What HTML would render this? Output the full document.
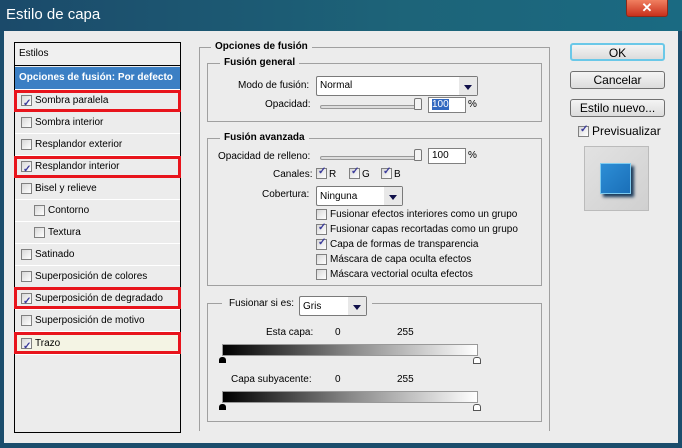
<!DOCTYPE html>
<html><head><meta charset="utf-8"><style>
*{box-sizing:border-box;margin:0;padding:0}
body{width:682px;height:448px;overflow:hidden;background:#1b4d6c;font-family:"Liberation Sans",sans-serif;font-size:10px;color:#000;position:relative}
.a{position:absolute}
#title{left:0;top:0;width:682px;height:31px;background:linear-gradient(90deg,#1b4a6a,#1d6479 60%,#1a6a82);}
#title span{position:absolute;left:6px;top:6px;color:#fff;font-size:15px}
#close{left:626px;top:0;width:42px;height:17px;background:linear-gradient(#f08060,#c8301c);border:1px solid #8a2a1a;border-top:none;border-radius:0 0 3px 3px;color:#fff;font-size:13px;font-weight:bold;text-align:center;line-height:15px}
#body{left:4px;top:31px;width:674px;height:412px;background:#ececec}
#list{left:14px;top:42px;width:167px;height:391px;border:1px solid #000;background:#ececec}
.row{position:absolute;left:0;width:165px;height:22px;border-bottom:1px solid #fff;line-height:21px;font-size:10px}
.cb{position:absolute;width:11px;height:11px;border:1px solid #808080;background:linear-gradient(135deg,#d8d8d8,#fff)}
.ck::after{content:"✓";position:absolute;left:1px;top:-3px;font-size:10px;color:#3a3a9a;font-weight:bold}
.red{position:absolute;left:14px;width:167px;height:22px;border:3px solid #e8141c}
fieldset{position:absolute;border:1px solid #a0a0a0;border-color:#a0a0a0 #a0a0a0 #a0a0a0 #a0a0a0}
.lg{position:absolute;background:#ececec;font-weight:bold;padding:0 4px;font-size:10px}
.sel{position:absolute;background:#fff;border:1px solid #7a7a7a;border-radius:2px;font-size:10px;padding-left:3px}
.sel i{position:absolute;right:0;top:0;bottom:0;width:18px;background:#e8e8e8;}
.sel i::after{content:"";position:absolute;left:5px;top:45%;border:4px solid transparent;border-top:5px solid #10104a;border-bottom:none}
.inp{position:absolute;background:#fff;border:1px solid #808080;height:16px;font-size:10px;padding-left:3px;line-height:14px;width:38px}
.sl{position:absolute;height:4px;border:1px solid #999;border-radius:2px;background:#ddd}
.th{position:absolute;width:8px;height:12px;background:#f4f4f4;border:1px solid #777;border-radius:2px 2px 1px 1px}
.btn{position:absolute;left:570px;width:95px;height:18px;border:1px solid #707070;border-radius:3px;background:linear-gradient(#f4f4f4,#dcdcdc);text-align:center;font-size:12px;line-height:16px}
.grad{position:absolute;left:222px;width:256px;height:12px;background:linear-gradient(90deg,#000,#888 50%,#fff);border:1px solid #999}
.tri{position:absolute;width:0;height:0}
</style></head><body>
<div id="title" class="a"><span>Estilo de capa</span></div>
<div id="close" class="a">✕</div>
<div id="body" class="a"></div>

<div id="list" class="a">
<div class="row" style="top:0;height:23px;border-bottom:1px solid #000;background:#f0f0f0;padding-left:4px">Estilos</div>
<div class="row" style="top:24px;height:23px;background:#3b7fc4;color:#fff;font-weight:bold;padding-left:4px;line-height:22px">Opciones de fusión: Por defecto</div>
<div class="row" style="top:47px"><span class="cb ck" style="left:6px;top:5px"></span><span style="position:absolute;left:20px">Sombra paralela</span></div>
<div class="row" style="top:69px"><span class="cb" style="left:6px;top:5px"></span><span style="position:absolute;left:20px">Sombra interior</span></div>
<div class="row" style="top:91px"><span class="cb" style="left:6px;top:5px"></span><span style="position:absolute;left:20px">Resplandor exterior</span></div>
<div class="row" style="top:113px"><span class="cb ck" style="left:6px;top:5px"></span><span style="position:absolute;left:20px">Resplandor interior</span></div>
<div class="row" style="top:135px"><span class="cb" style="left:6px;top:5px"></span><span style="position:absolute;left:20px">Bisel y relieve</span></div>
<div class="row" style="top:157px"><span class="cb" style="left:19px;top:5px"></span><span style="position:absolute;left:33px">Contorno</span></div>
<div class="row" style="top:179px"><span class="cb" style="left:19px;top:5px"></span><span style="position:absolute;left:33px">Textura</span></div>
<div class="row" style="top:201px"><span class="cb" style="left:6px;top:5px"></span><span style="position:absolute;left:20px">Satinado</span></div>
<div class="row" style="top:223px"><span class="cb" style="left:6px;top:5px"></span><span style="position:absolute;left:20px">Superposición de colores</span></div>
<div class="row" style="top:245px"><span class="cb ck" style="left:6px;top:5px"></span><span style="position:absolute;left:20px">Superposición de degradado</span></div>
<div class="row" style="top:267px"><span class="cb" style="left:6px;top:5px"></span><span style="position:absolute;left:20px">Superposición de motivo</span></div>
<div class="row" style="top:290px;background:#f4f4e4"><span class="cb ck" style="left:6px;top:5px"></span><span style="position:absolute;left:20px">Trazo</span></div>
</div>
<div class="red" style="top:90px"></div>
<div class="red" style="top:156px"></div>
<div class="red" style="top:287px"></div>
<div class="red" style="top:332px"></div>

<fieldset style="left:199px;top:47px;width:351px;height:384px;border-bottom:none"></fieldset>
<div class="lg" style="left:211px;top:41px">Opciones de fusión</div>
<fieldset style="left:207px;top:63px;width:335px;height:59px"></fieldset>
<div class="lg" style="left:220px;top:57px">Fusión general</div>
<div class="a" style="left:238px;top:80px">Modo de fusión:</div>
<div class="sel" style="left:316px;top:76px;width:162px;height:20px;line-height:18px">Normal<i></i></div>
<div class="a" style="left:265px;top:99px">Opacidad:</div>
<div class="sl" style="left:320px;top:105px;width:100px"></div>
<div class="th" style="left:414px;top:98px"></div>
<div class="inp" style="left:428px;top:97px"><span style="background:#3168c0;color:#fff">100</span></div>
<div class="a" style="left:468px;top:99px">%</div>

<fieldset style="left:207px;top:138px;width:335px;height:148px"></fieldset>
<div class="lg" style="left:220px;top:132px">Fusión avanzada</div>
<div class="a" style="left:218px;top:151px">Opacidad de relleno:</div>
<div class="sl" style="left:320px;top:156px;width:100px"></div>
<div class="th" style="left:414px;top:149px"></div>
<div class="inp" style="left:428px;top:148px">100</div>
<div class="a" style="left:468px;top:150px">%</div>
<div class="a" style="left:273px;top:169px">Canales:</div>
<span class="cb ck a" style="left:316px;top:168px"></span><div class="a" style="left:329px;top:169px">R</div>
<span class="cb ck a" style="left:349px;top:168px"></span><div class="a" style="left:362px;top:169px">G</div>
<span class="cb ck a" style="left:381px;top:168px"></span><div class="a" style="left:394px;top:169px">B</div>
<div class="a" style="left:262px;top:189px">Cobertura:</div>
<div class="sel" style="left:316px;top:186px;width:87px;height:20px;line-height:20px">Ninguna<i></i></div>
<span class="cb a" style="left:316px;top:209px"></span><div class="a" style="left:330px;top:209px">Fusionar efectos interiores como un grupo</div>
<span class="cb ck a" style="left:316px;top:224px"></span><div class="a" style="left:330px;top:224px">Fusionar capas recortadas como un grupo</div>
<span class="cb ck a" style="left:316px;top:239px"></span><div class="a" style="left:330px;top:239px">Capa de formas de transparencia</div>
<span class="cb a" style="left:316px;top:254px"></span><div class="a" style="left:330px;top:254px">Máscara de capa oculta efectos</div>
<span class="cb a" style="left:316px;top:269px"></span><div class="a" style="left:330px;top:269px">Máscara vectorial oculta efectos</div>

<fieldset style="left:207px;top:303px;width:335px;height:119px"></fieldset>
<div class="a" style="left:222px;top:296px;background:#ececec;padding:0 6px 0 8px;width:150px;height:12px"></div>
<div class="a" style="left:229px;top:298px">Fusionar si es:</div>
<div class="sel" style="left:299px;top:296px;width:68px;height:20px;line-height:20px">Gris<i></i></div>
<div class="a" style="left:266px;top:327px">Esta capa:</div>
<div class="a" style="left:335px;top:327px">0</div>
<div class="a" style="left:397px;top:327px">255</div>
<div class="grad" style="top:344px"></div>
<div class="a" style="left:219px;top:357px;width:7px;height:6px;background:#000;border-radius:3px 3px 0 0"></div>
<div class="a" style="left:473px;top:357px;width:8px;height:7px;background:#fff;border:1px solid #555;border-radius:3px 3px 0 0"></div>
<div class="a" style="left:231px;top:374px">Capa subyacente:</div>
<div class="a" style="left:335px;top:374px">0</div>
<div class="a" style="left:397px;top:374px">255</div>
<div class="grad" style="top:391px"></div>
<div class="a" style="left:219px;top:404px;width:7px;height:6px;background:#000;border-radius:3px 3px 0 0"></div>
<div class="a" style="left:473px;top:404px;width:8px;height:7px;background:#fff;border:1px solid #555;border-radius:3px 3px 0 0"></div>

<div class="btn" style="top:43px;border:2px solid #6ac8e8">OK</div>
<div class="btn" style="top:71px">Cancelar</div>
<div class="btn" style="top:99px">Estilo nuevo...</div>
<span class="cb ck a" style="left:578px;top:126px"></span>
<div class="a" style="left:592px;top:124px;font-size:12px">Previsualizar</div>
<div class="a" style="left:584px;top:146px;width:65px;height:65px;background:linear-gradient(135deg,#e2e2e2,#d0d0d0);border:1px solid #bbb"></div>
<div class="a" style="left:600px;top:163px;width:31px;height:31px;background:linear-gradient(135deg,#2d8ed6,#1a6fb8);border:1px solid #7ecbf0;box-shadow:3px 3px 3px #1a3a5a"></div>
</body></html>
